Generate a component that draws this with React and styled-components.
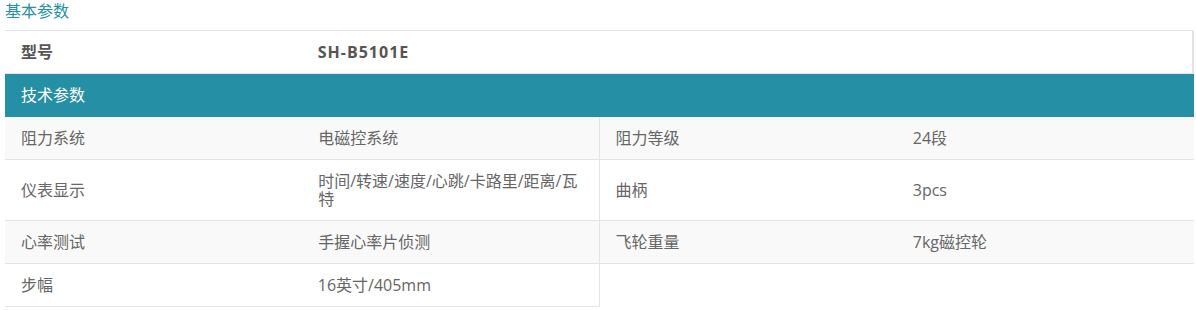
import React from 'react';
import styled, { createGlobalStyle } from 'styled-components';

const GlobalStyle = createGlobalStyle`
  body {
    margin: 0;
    background: #fff;
    font-family: "Open Sans", "Noto Sans CJK SC", sans-serif;
  }
`;

const Wrap = styled.div`
  padding: 0 2px 0 5px;
  color: #666;
  font-size: 16px;
`;

const Title = styled.div`
  height: 30px;
  line-height: 22px;
  color: #2590a5;
`;

const Row = styled.div`
  display: grid;
  grid-template-columns: repeat(4, 1fr);
  align-items: center;
  background: ${props => (props.shade ? '#f9f9f9' : '#fff')};
  border-bottom: 1px solid #e4e4e4;
`;

const ModelRow = styled(Row)`
  border-top: 1px solid #e4e4e4;
  border-right: 2px solid #e4e4e4;
  font-weight: 700;
  color: #555;
`;

const Header = styled.div`
  height: 43px;
  line-height: 42px;
  padding: 0 16px;
  background: #258fa5;
  color: #fff;
`;

const Cell = styled.div`
  padding: 12px 16px;
  line-height: 18px;
  min-width: 0;
  align-self: stretch;
  display: flex;
  align-items: center;
  letter-spacing: ${props => (props.wide ? '1px' : 'normal')};
  border-right: ${props => (props.edge ? '1px solid #e4e4e4' : 'none')};
`;

const LastRow = styled.div`
  display: grid;
  grid-template-columns: repeat(4, 1fr);
`;

const LastPair = styled.div`
  grid-column: span 2;
  display: grid;
  grid-template-columns: 1fr 1fr;
  border-bottom: 1px solid #e4e4e4;
  border-right: 1px solid #e4e4e4;
`;

const specs = [
  ['阻力系统', '电磁控系统', '阻力等级', '24段'],
  ['仪表显示', '时间/转速/速度/心跳/卡路里/距离/瓦特', '曲柄', '3pcs'],
  ['心率测试', '手握心率片侦测', '飞轮重量', '7kg磁控轮'],
];

export default function App() {
  return (
    <>
      <GlobalStyle />
      <Wrap>
        <Title>基本参数</Title>
        <ModelRow>
          <Cell>型号</Cell>
          <Cell wide>SH-B5101E</Cell>
        </ModelRow>
        <Header>技术参数</Header>
        {specs.map((s, i) => (
          <Row key={s[0]} shade={i % 2 === 0}>
            <Cell>{s[0]}</Cell>
            <Cell edge>{s[1]}</Cell>
            <Cell>{s[2]}</Cell>
            <Cell>{s[3]}</Cell>
          </Row>
        ))}
        <LastRow>
          <LastPair>
            <Cell>步幅</Cell>
            <Cell>16英寸/405mm</Cell>
          </LastPair>
        </LastRow>
      </Wrap>
    </>
  );
}
